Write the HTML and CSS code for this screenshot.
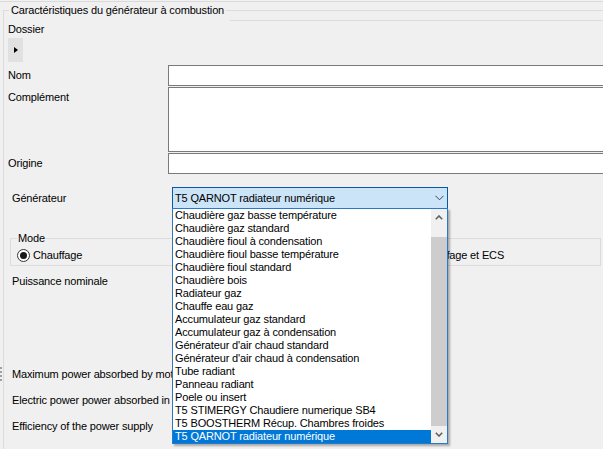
FILE: index.html
```html
<!DOCTYPE html>
<html lang="fr">
<head>
    <meta charset="UTF-8">
    <title>Caractéristiques du générateur</title>
    <link rel="stylesheet" href="styles.css">
</head>
<body>
    <div class="topline"></div>
    <div class="grip"></div>
    <fieldset class="panel">
        <legend>Caractéristiques du générateur à combustion</legend>
        <div class="rule"></div>

        <div class="label">Dossier</div>
        <button class="expander" type="button"><span class="arrow"></span></button>

        <div class="fields">
            <div class="label">Nom</div>
            <div class="box"></div>
            <div class="label">Complément</div>
            <div class="box tall"></div>
            <div class="label">Origine</div>
            <div class="box"></div>
        </div>

        <div class="generator">
            <div class="label">Générateur</div>
            <div class="combo">
                <span>T5 QARNOT radiateur numérique</span>
                <svg class="chevron" width="9" height="6" viewBox="0 0 9 6"><path d="M0.5 0.8 L4.5 4.8 L8.5 0.8" fill="none" stroke="#444" stroke-width="1"/></svg>
            </div>
        </div>

        <fieldset class="mode">
            <legend>Mode</legend>
            <div class="options">
                <label class="radio first"><span class="dot checked"></span>Chauffage</label>
                <label class="radio"><span class="dot"></span>Chauffage et ECS</label>
            </div>
        </fieldset>

        <div class="label indent">Puissance nominale</div>
        <div class="label indent lower">Maximum power absorbed by motors</div>
        <div class="label indent next">Electric power power absorbed in standby</div>
        <div class="label indent next">Efficiency of the power supply</div>
    </fieldset>

    <div class="dropdown">
        <ul class="items">
            <li>Chaudière gaz basse température</li>
            <li>Chaudière gaz standard</li>
            <li>Chaudière fioul à condensation</li>
            <li>Chaudière fioul basse température</li>
            <li>Chaudière fioul standard</li>
            <li>Chaudière bois</li>
            <li>Radiateur gaz</li>
            <li>Chauffe eau gaz</li>
            <li>Accumulateur gaz standard</li>
            <li>Accumulateur gaz à condensation</li>
            <li>Générateur d'air chaud standard</li>
            <li>Générateur d'air chaud à condensation</li>
            <li>Tube radiant</li>
            <li>Panneau radiant</li>
            <li>Poele ou insert</li>
            <li>T5 STIMERGY Chaudiere numerique SB4</li>
            <li>T5 BOOSTHERM Récup. Chambres froides</li>
            <li class="selected">T5 QARNOT radiateur numérique</li>
        </ul>
        <div class="scrollbar">
            <div class="step">
                <svg width="8" height="5" viewBox="0 0 8 5"><path d="M0.8 4.2 L4 1 L7.2 4.2" fill="none" stroke="#606060" stroke-width="1.6"/></svg>
            </div>
            <div class="track"><div class="thumb"></div></div>
            <div class="step">
                <svg width="8" height="5" viewBox="0 0 8 5"><path d="M0.8 0.8 L4 4 L7.2 0.8" fill="none" stroke="#606060" stroke-width="1.6"/></svg>
            </div>
        </div>
    </div>
</body>
</html>
```

FILE: styles.css
```css
body {
    margin: 0;
    height: 449px;
    overflow: hidden;
    background-color: #f0f0f0;
    color: #000;
    font-family: "Liberation Sans", Arial, sans-serif;
    font-size: 11px;
    letter-spacing: -0.15px;
    position: relative;
}

.topline {
    margin-top: 1px;
    height: 1px;
    background-color: #dadada;
}

/* splitter handle on the left edge */
.grip {
    position: absolute;
    left: 0;
    top: 367px;
    width: 1px;
    height: 14px;
    border-left: 2px dotted #a0a0a0;
}

.panel {
    margin: 2px 0 0 3px;
    padding: 0 0 0 4px;
    width: 640px;
    min-height: 500px;
    border: 1px solid #dcdcdc;
    border-right: none;
    box-sizing: border-box;
}

.panel > legend {
    padding: 0 2px;
    margin-left: 1px;
    line-height: 12px;
}

.rule {
    margin: 4px 0 0 222px;
    border-top: 1px solid #dcdcdc;
}

.label {
    line-height: 16px;
    white-space: nowrap;
}

.panel > .label:first-of-type {
    margin-top: 4px;
}

.expander {
    display: flex;
    align-items: center;
    justify-content: center;
    margin-top: 1px;
    width: 15px;
    height: 24px;
    padding: 0;
    border: none;
    background-color: #e1e1e1;
}

.arrow {
    width: 0;
    height: 0;
    border-left: 4px solid #000;
    border-top: 3.5px solid transparent;
    border-bottom: 3.5px solid transparent;
}

/* Nom / Complément / Origine */
.fields {
    display: grid;
    grid-template-columns: 160px 1fr;
    row-gap: 1px;
    margin-top: 3px;
}

.fields .label {
    padding-top: 2px;
}

.box {
    height: 19px;
    background-color: #fff;
    border: 1px solid #7a7a7a;
    border-right: none;
}

.box.tall {
    height: 63px;
}

.generator {
    display: flex;
    align-items: center;
    margin-top: 13px;
}

.generator .label {
    width: 160px;
    padding-left: 4px;
}

.combo {
    display: flex;
    align-items: center;
    justify-content: space-between;
    width: 272px;
    height: 20px;
    padding-left: 2px;
    border: 1px solid #0a58a6;
    background-color: #cce4f7;
}

.combo span {
    line-height: 16px;
}

.chevron {
    margin-right: 3px;
}

.mode {
    margin: 22px 0 0 2px;
    padding: 0 0 2px 6px;
    width: 591px;
    border: 1px solid #dcdcdc;
    box-sizing: border-box;
}

.mode legend {
    padding: 0 1px;
    line-height: 14px;
}

.options {
    display: flex;
    margin-top: 2px;
}

.radio {
    display: flex;
    align-items: center;
    gap: 3px;
    line-height: 16px;
}

.radio.first {
    width: 385px;
}

.dot {
    width: 11px;
    height: 11px;
    border: 1px solid #333;
    border-radius: 50%;
    background-color: #fff;
    display: flex;
    align-items: center;
    justify-content: center;
}

.dot.checked::after {
    content: "";
    width: 7px;
    height: 7px;
    border-radius: 50%;
    background-color: #1a1a1a;
}

.indent {
    padding-left: 4px;
}

.mode + .indent {
    margin-top: 7px;
}

.lower {
    margin-top: 77px;
}

.next {
    margin-top: 10px;
}

/* open list of the Générateur combo */
.dropdown {
    position: absolute;
    left: 172px;
    top: 208px;
    width: 274px;
    height: 234px;
    display: flex;
    background-color: #fff;
    border: 1px solid #2b78c8;
    box-shadow: 2px 2px 2px rgba(0, 0, 0, 0.3);
}

.items {
    flex: 1;
    list-style: none;
    margin: 0;
    padding: 0;
}

.items li {
    line-height: 13px;
    height: 13px;
    padding-left: 2px;
    white-space: nowrap;
    overflow: hidden;
}

.items li.selected {
    background-color: #0078d7;
    color: #fff;
}

.scrollbar {
    width: 16px;
    display: flex;
    flex-direction: column;
    background-color: #f0f0f0;
}

.step {
    height: 17px;
    display: flex;
    align-items: center;
    justify-content: center;
}

.track {
    flex: 1;
    padding-top: 11px;
    display: flex;
    flex-direction: column;
}

.thumb {
    flex: 1;
    background-color: #cdcdcd;
}
```
